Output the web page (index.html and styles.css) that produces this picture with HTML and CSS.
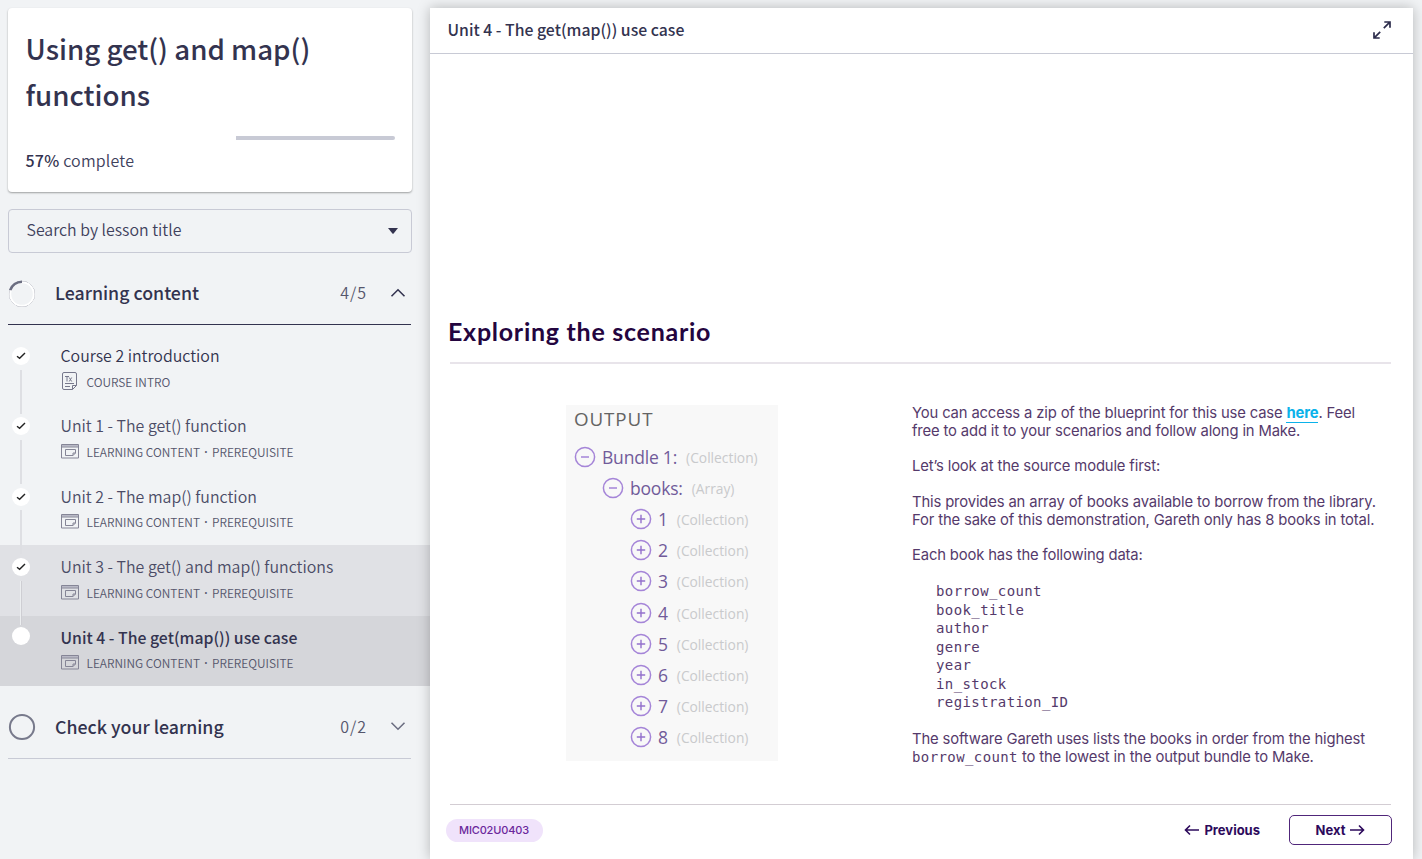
FILE: index.html
```html
<!DOCTYPE html>
<html lang="en">
<head>
<meta charset="utf-8">
<title>Using get() and map() functions</title>
<link rel="stylesheet" href="styles.css">
</head>
<body>
<svg class="defs" width="0" height="0" aria-hidden="true">
  <symbol id="check" viewBox="0 0 18 18"><path d="M5 9.3 7.6 11.3 13 6" fill="none" stroke="#222" stroke-width="1.4"/></symbol>
  <symbol id="slide" viewBox="0 0 18 15"><path d="M1 1h16v1.700H1z" fill="#b9b9c6"/><g fill="none" stroke="#858596" stroke-width="1"><path d="M.5.5h17v13.500h-17zM.5 3h17"/><path d="M4.500 5.500h10v3.500l-2.500 2.500h-7.500zM14.500 9h-2.500v2.500"/></g></symbol>
  <symbol id="doc" viewBox="0 0 15 18"><g fill="none" stroke="#77788c" stroke-width="1"><path d="M2 .5h11q1.500 0 1.500 1.500v11.500l-4 4H2Q.5 17.500.5 16V2Q.5.500 2 .5zM14.500 13.500h-4v4M3 11.500h9M3 14.500h5"/><path d="M3 4.500h4M5 4.500v5M7.200 5.500l2.500 4M9.700 5.500l-2.500 4"/></g></symbol>
  <symbol id="minus" viewBox="0 0 22 22"><g fill="none" stroke="#a585d8"><circle cx="11" cy="11" r="9.600" stroke-width="1.500"/><path d="M7 11h8" stroke-width="1.500"/></g></symbol>
  <symbol id="plus" viewBox="0 0 22 22"><g fill="none" stroke="#a585d8"><circle cx="11" cy="11" r="9.600" stroke-width="1.500"/><path d="M6.800 11h8.400M11 6.800v8.400" stroke="#9370cc" stroke-width="1.400"/></g></symbol>
</svg>
<div class="app">
  <aside class="sidebar">
    <section class="course-card">
      <h1 class="course-title">Using get() and map() functions</h1>
      <div class="progress"><div class="progress-rest"></div></div>
      <p class="complete"><b>57%</b> complete</p>
    </section>
    <div class="search"><span>Search by lesson title</span><svg width="10" height="6" viewBox="0 0 10 6"><path d="M0 0h10L5.600 5.500q-.6.600-1.200 0z" fill="#33334f"/></svg></div>
    <div class="section-head open">
      <svg class="ring" width="28" height="28" viewBox="0 0 28 28"><circle cx="14" cy="14" r="12.600" fill="none" stroke="#8d8f9e" stroke-width="1"/><circle cx="14" cy="14" r="11.800" fill="none" stroke="#fff" stroke-width="2"/><path d="M2.200 10.200A12.300 12.300 0 0 1 14 1.700" fill="none" stroke="#6b6d80" stroke-width="2.600"/></svg>
      <h2>Learning content</h2><span class="count">4/5</span>
      <svg class="chev" width="16" height="10" viewBox="0 0 16 10"><path d="M1.500 8.200 8 1.800l6.500 6.400" fill="none" stroke="#33334f" stroke-width="1.600"/></svg>
    </div>
    <ul class="lessons">
      <li class="lesson intro"><span class="dot"><svg width="18" height="18"><use href="#check"/></svg></span><div><h3>Course 2 introduction</h3><p class="meta"><svg class="doc" width="15" height="18"><use href="#doc"/></svg><span>COURSE INTRO</span></p></div></li>
      <li class="lesson"><span class="dot"><svg width="18" height="18"><use href="#check"/></svg></span><div><h3>Unit 1 - The get() function</h3><p class="meta"><svg width="18" height="15"><use href="#slide"/></svg><span>LEARNING CONTENT<span class="sep">·</span>PREREQUISITE</span></p></div></li>
      <li class="lesson"><span class="dot"><svg width="18" height="18"><use href="#check"/></svg></span><div><h3>Unit 2 - The map() function</h3><p class="meta"><svg width="18" height="15"><use href="#slide"/></svg><span>LEARNING CONTENT<span class="sep">·</span>PREREQUISITE</span></p></div></li>
      <li class="lesson hover"><span class="dot"><svg width="18" height="18"><use href="#check"/></svg></span><div><h3>Unit 3 - The get() and map() functions</h3><p class="meta"><svg width="18" height="15"><use href="#slide"/></svg><span>LEARNING CONTENT<span class="sep">·</span>PREREQUISITE</span></p></div></li>
      <li class="lesson current"><span class="dot"></span><div><h3>Unit 4 - The get(map()) use case</h3><p class="meta"><svg width="18" height="15"><use href="#slide"/></svg><span>LEARNING CONTENT<span class="sep">·</span>PREREQUISITE</span></p></div></li>
    </ul>
    <div class="section-head closed">
      <svg class="ring" width="28" height="28" viewBox="0 0 28 28"><circle cx="14" cy="14" r="12.100" fill="none" stroke="#77798b" stroke-width="2"/></svg>
      <h2>Check your learning</h2><span class="count">0/2</span>
      <svg class="chev" width="16" height="10" viewBox="0 0 16 10"><path d="M1.500 1.800 8 8.200l6.500-6.400" fill="none" stroke="#6b6d80" stroke-width="1.600"/></svg>
    </div>
  </aside>
  <main class="panel">
    <header class="panel-head"><h2>Unit 4 - The get(map()) use case</h2>
      <svg width="20" height="20" viewBox="0 0 20 20"><path d="M11.800 8.200 17.800 2.200M12.300 2h5.700v5.700M8.200 11.800 2.200 17.800M2 12.300V18h5.700" fill="none" stroke="#2d2d4c" stroke-width="1.700"/></svg>
    </header>
    <article class="slide">
      <h1 class="slide-title">Exploring the scenario</h1>
      <div class="columns">
        <div class="output">
          <div class="output-title">OUTPUT</div>
          <div class="node"><svg width="22" height="22"><use href="#minus"/></svg><b>Bundle 1:</b><i>(Collection)</i></div>
          <div class="node level2"><svg width="22" height="22"><use href="#minus"/></svg><b>books:</b><i>(Array)</i></div>
          <div class="node level3"><svg width="22" height="22"><use href="#plus"/></svg><b>1</b><i>(Collection)</i></div>
          <div class="node level3"><svg width="22" height="22"><use href="#plus"/></svg><b>2</b><i>(Collection)</i></div>
          <div class="node level3"><svg width="22" height="22"><use href="#plus"/></svg><b>3</b><i>(Collection)</i></div>
          <div class="node level3"><svg width="22" height="22"><use href="#plus"/></svg><b>4</b><i>(Collection)</i></div>
          <div class="node level3"><svg width="22" height="22"><use href="#plus"/></svg><b>5</b><i>(Collection)</i></div>
          <div class="node level3"><svg width="22" height="22"><use href="#plus"/></svg><b>6</b><i>(Collection)</i></div>
          <div class="node level3"><svg width="22" height="22"><use href="#plus"/></svg><b>7</b><i>(Collection)</i></div>
          <div class="node level3"><svg width="22" height="22"><use href="#plus"/></svg><b>8</b><i>(Collection)</i></div>
        </div>
        <div class="copy">
          <p>You can access a zip of the blueprint for this use case <a>here</a>. Feel<br>free to add it to your scenarios and follow along in Make.</p>
          <p>Let’s look at the source module first:</p>
          <p>This provides an array of books available to borrow from the library.<br>For the sake of this demonstration, Gareth only has 8 books in total.</p>
          <p>Each book has the following data:</p>
          <ul class="fields"><li>borrow_count</li><li>book_title</li><li>author</li><li>genre</li><li>year</li><li>in_stock</li><li>registration_ID</li></ul>
          <p>The software Gareth uses lists the books in order from the highest<br><code>borrow_count</code> to the lowest in the output bundle to Make.</p>
        </div>
      </div>
      <footer class="slide-foot">
        <span class="code-pill">MIC02U0403</span>
        <span class="prev"><svg width="16" height="12" viewBox="0 0 16 12"><path d="M15 6H1.500M6 1.500 1.500 6 6 10.500" fill="none" stroke="#2d0a5c" stroke-width="1.600"/></svg>Previous</span>
        <span class="next">Next<svg width="16" height="12" viewBox="0 0 16 12"><path d="M1 6h13.500M10 1.500 14.500 6 10 10.500" fill="none" stroke="#2d0a5c" stroke-width="1.600"/></svg></span>
      </footer>
    </article>
  </main>
</div>
</body>
</html>
```
FILE: styles.css
```css
* { box-sizing: border-box; }
body { margin: 0; background: #f1f3f5; color: #33334f; font-family: "Noto Sans CJK SC", "Noto Sans", sans-serif; overflow: hidden; }
h1, h2, h3, p, ul { margin: 0; padding: 0; list-style: none; font-weight: 400; }
svg { display: block; flex: none; }
.defs { position: absolute; }
.app { display: flex; height: 859px; }

.sidebar { width: 430px; padding-top: 8px; flex: none; }
.course-card { width: 404px; height: 184px; margin-left: 8px; padding: 17px 17px 0 18px; background: #fff; border-radius: 4px; box-shadow: 0 1px 2px rgba(0,0,0,.35); }
.course-title { margin-left: -.5px; font-size: 27.700px; line-height: 46px; font-weight: 500; }
.progress { height: 4px; margin-top: 19px; display: flex; justify-content: flex-end; }
.progress-rest { width: 159px; background: #c8cad5; border-radius: 0 2px 2px 0; }
.complete { font-size: 16px; line-height: 24px; margin: 8px 0 0 -.5px; color: #40415c; font-weight: 350; letter-spacing: .2px; }
.complete b { font-weight: 500; color: #33334f; }
.search { width: 404px; height: 44px; margin: 17px 0 0 8px; padding: 0 13px 3px 17.500px; border: 1px solid #c8cad5; border-radius: 4px; display: flex; align-items: center; justify-content: space-between; font-size: 15.900px; font-weight: 350; color: #40415c; }
.search svg { margin-top: 3px; }

.section-head { display: flex; align-items: center; width: 403px; margin-left: 8px; }
.section-head h2 { margin: -3px 0 0 19px; font-size: 17.750px; line-height: 28px; font-weight: 500; flex: 1; }
.count { margin: -3px 23px 0 0; font-size: 16px; font-weight: 350; letter-spacing: 1px; color: #55566c; }
.chev { margin: -1px 5px 0 0; }
.open { height: 62px; margin-top: 10px; border-bottom: 1px solid #33334f; }
.closed { height: 63px; margin-top: 10px; border-bottom: 1px solid #c8cad5; }
.closed h2, .closed .count { margin-top: -1px; }

.lessons { margin-top: 9px; }
.lesson { height: 70.4px; display: flex; padding: 9px 0 0 12px; position: relative; }
.lesson > div { margin-left: 30.500px; }
.lesson h3 { font-size: 15.930px; line-height: 26px; color: #4b4c66; font-weight: 350; white-space: nowrap; }
.lesson.intro h3 { color: #33334f; }
.lesson .dot { width: 18px; height: 18px; margin-top: 4px; border-radius: 50%; background: #fff; flex: none; }
.lesson:not(.current)::after { content: ""; position: absolute; left: 20px; top: 35.500px; width: 2px; height: 44px; background: #dedfe3; z-index: 1; }
.lesson.hover::after { background: linear-gradient(90deg, #eceef0 50%, #ceced3 50%) !important; }
.meta { display: flex; align-items: center; height: 20px; margin-top: 2px; font-size: 11.920px; font-weight: 350; color: #55566c; white-space: nowrap; }
.meta svg { margin-right: 8px; }
.meta .doc { margin: 0 9.500px 0 1.500px; }
.sep { display: inline-block; width: 12px; text-align: center; font-family: "Noto Sans", sans-serif; font-weight: 600; }
.hover { background: #e0e1e5; }
.current { background: #d5d6da; }
.lesson.current h3 { font-size: 15.800px; font-weight: 500; color: #33334f; }
.lesson.current .dot { margin-top: 2px; }

.panel { width: 983px; margin-top: 8px; background: #fff; box-shadow: 0 0 12px rgba(0,0,0,.25); flex: none; z-index: 2; }
.panel-head { height: 46px; padding: 0 21px 1px 17.500px; border-bottom: 1px solid #c8cad5; display: flex; align-items: center; justify-content: space-between; }
.panel-head h2 { margin-top: -2px; font-size: 15.800px; font-weight: 500; }
.slide { padding: 259px 22px 0 20px; color: #553a6b; font-family: Inter, sans-serif; }
.slide-title { height: 49px; margin-left: -2px; font: 700 25px/36px Lato, sans-serif; letter-spacing: .73px; color: #24053f; }
.columns { display: flex; height: 443px; padding-top: 41px; border-top: 2px solid #e8e4ea; border-bottom: 1px solid #d3cdd3; }
.output { width: 212px; height: 356px; margin-left: 116px; padding: 1px 0 0 8px; background: #f8f8f8; font-family: "Open Sans", "Noto Sans", sans-serif; flex: none; }
.output-title { font-size: 18.800px; line-height: 27px; height: 35.500px; letter-spacing: .9px; color: #646464; }
.node { height: 31.100px; display: flex; align-items: center; }
.node b { margin-left: 6px; font-size: 17.500px; letter-spacing: -.2px; font-weight: 400; color: #715b9a; }
.node i { margin: 1px 0 0 9px; font-size: 13.800px; font-style: normal; color: #c9cacc; }
.level2 { padding-left: 28px; }
.level3 { padding-left: 56px; }
.copy { margin: -1px 0 0 134px; font-size: 14.800px; letter-spacing: -.14px; line-height: 18px; font-weight: 300; white-space: nowrap; }
.copy p { margin-bottom: 17.400px; }
.copy a { color: #0bb2ea; font-weight: 700; border-bottom: 1px solid #0bb2ea; }
.fields, code { font-family: "DejaVu Sans Mono", monospace; font-size: 14px; letter-spacing: .4px; }
.fields { margin: 18px 0 18px 24px; line-height: 18.500px; }
code { line-height: 17px; }
.slide-foot { display: flex; align-items: center; height: 50px; margin-left: -4px; margin-right: -1px; font-size: 13px; font-weight: 700; color: #2d0a5c; }
.code-pill { width: 97px; height: 23px; padding-right: 1px; border-radius: 12px; background: #f0e3fb; color: #6b289b; font-size: 11px; letter-spacing: -.15px; font-weight: 500; display: flex; align-items: center; justify-content: center; }
.prev { display: flex; align-items: center; margin-left: auto; gap: 4px; }
.next { width: 103px; height: 30px; margin-left: 29px; border: 1px solid #50267a; border-radius: 5px; display: flex; align-items: center; justify-content: center; gap: 4px; }
```
